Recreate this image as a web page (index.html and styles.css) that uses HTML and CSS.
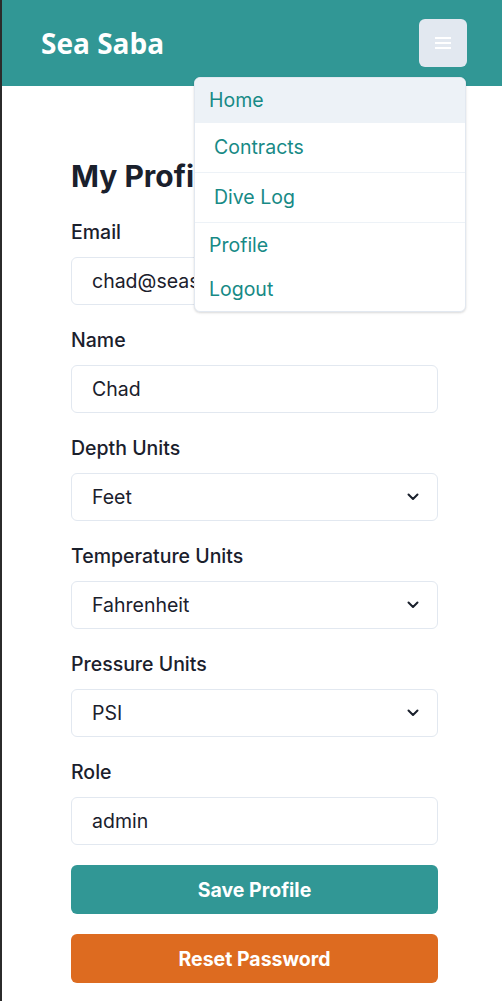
FILE: index.html
```html
<!DOCTYPE html>
<html lang="en">
<head>
<meta charset="utf-8">
<title>Sea Saba - My Profile</title>
<link rel="stylesheet" href="styles.css">
</head>
<body>
<div class="page">
  <header class="topbar">
    <div class="logo">Sea Saba</div>
    <div class="menu-wrap">
      <button class="menu-btn" aria-label="Menu">
        <svg width="16" height="12" viewBox="0 0 16 12"><rect x="0" y="0" width="16" height="2" fill="#fff"/><rect x="0" y="5" width="16" height="2" fill="#fff"/><rect x="0" y="10" width="16" height="2" fill="#fff"/></svg>
      </button>
      <nav class="dropdown">
        <a class="dd-item active">Home</a>
        <a class="dd-item boxed">Contracts</a>
        <a class="dd-item boxed">Dive Log</a>
        <a class="dd-item plain">Profile</a>
        <a class="dd-item plain">Logout</a>
      </nav>
    </div>
  </header>
  <main class="content">
    <h1 class="title">My Profile</h1>
    <div class="field">
      <label class="label">Email</label>
      <div class="input">chad@seasaba.com</div>
    </div>
    <div class="field">
      <label class="label">Name</label>
      <div class="input">Chad</div>
    </div>
    <div class="field">
      <label class="label">Depth Units</label>
      <div class="input select">Feet<svg class="chev" width="12" height="8" viewBox="0 0 12 8"><path d="M1.5 1.5 L6 6 L10.5 1.5" fill="none" stroke="#1a202c" stroke-width="2" stroke-linecap="round" stroke-linejoin="round"/></svg></div>
    </div>
    <div class="field">
      <label class="label">Temperature Units</label>
      <div class="input select">Fahrenheit<svg class="chev" width="12" height="8" viewBox="0 0 12 8"><path d="M1.5 1.5 L6 6 L10.5 1.5" fill="none" stroke="#1a202c" stroke-width="2" stroke-linecap="round" stroke-linejoin="round"/></svg></div>
    </div>
    <div class="field">
      <label class="label">Pressure Units</label>
      <div class="input select">PSI<svg class="chev" width="12" height="8" viewBox="0 0 12 8"><path d="M1.5 1.5 L6 6 L10.5 1.5" fill="none" stroke="#1a202c" stroke-width="2" stroke-linecap="round" stroke-linejoin="round"/></svg></div>
    </div>
    <div class="field">
      <label class="label">Role</label>
      <div class="input">admin</div>
    </div>
    <button class="btn btn-save">Save Profile</button>
    <button class="btn btn-reset">Reset Password</button>
  </main>
</div>
</body>
</html>
```
FILE: styles.css
```css
* { box-sizing: border-box; }
html, body { margin: 0; padding: 0; }
body {
  font-family: Inter, "Noto Sans", sans-serif;
  color: #1a202c;
  background: #ffffff;
}
.page {
  border-left: 2px solid #2b2b2b;
  min-height: 1001px;
}
.topbar {
  height: 86px;
  background: #319795;
  display: flex;
  align-items: center;
  justify-content: space-between;
  padding: 0 35px 0 39px;
}
.logo {
  font-family: "Open Sans", sans-serif;
  font-weight: 700;
  font-size: 28px;
  color: #ffffff;
}
.menu-wrap {
  position: relative;
}
.menu-btn {
  width: 48px;
  height: 48px;
  border: none;
  border-radius: 6px;
  background: #e2e8f0;
  display: flex;
  align-items: center;
  justify-content: center;
  padding: 0;
}
.dropdown {
  position: absolute;
  top: 58px;
  right: 1px;
  width: 272px;
  background: #fff;
  border: 1px solid #e2e8f0;
  border-radius: 6px;
  box-shadow: 0 1px 3px rgba(0,0,0,0.1), 0 1px 2px rgba(0,0,0,0.06);
  overflow: hidden;
  z-index: 10;
}
.dd-item {
  display: block;
  font-size: 19.5px;
  color: #178a86;
  padding-left: 14px;
  text-decoration: none;
}
.dd-item.active {
  background: #edf2f7;
  height: 45px;
  line-height: 45px;
}
.dd-item.boxed {
  height: 50px;
  line-height: 49px;
  padding-left: 19px;
  border-bottom: 1px solid #edf2f7;
}
.dd-item.plain {
  height: 44px;
  line-height: 44px;
}
.content {
  padding: 74px 0 0 69px;
  width: 436px;
}
.title {
  font-size: 30px;
  font-weight: 700;
  line-height: 33px;
  margin: 0 0 26px 0;
  color: #1a202c;
}
.field {
  display: flex;
  flex-direction: column;
  margin-bottom: 22px;
}
.label {
  font-size: 19.5px;
  font-weight: 500;
  line-height: 27px;
  margin-bottom: 11px;
}
.input {
  height: 48px;
  border: 1px solid #e2e8f0;
  border-radius: 6px;
  padding: 0 20px;
  font-size: 19.5px;
  display: flex;
  align-items: center;
  justify-content: space-between;
  color: #1a202c;
}
.select { padding-right: 18px; }
.chev { display: block; }
.btn {
  display: block;
  width: 100%;
  height: 49px;
  border: none;
  border-radius: 6px;
  color: #fff;
  font-family: Inter, sans-serif;
  font-size: 19.5px;
  font-weight: 700;
  margin-bottom: 20px;
}
.btn-save { background: #319795; margin-top: -2px; }
.btn-reset { background: #dd6b20; }
```
